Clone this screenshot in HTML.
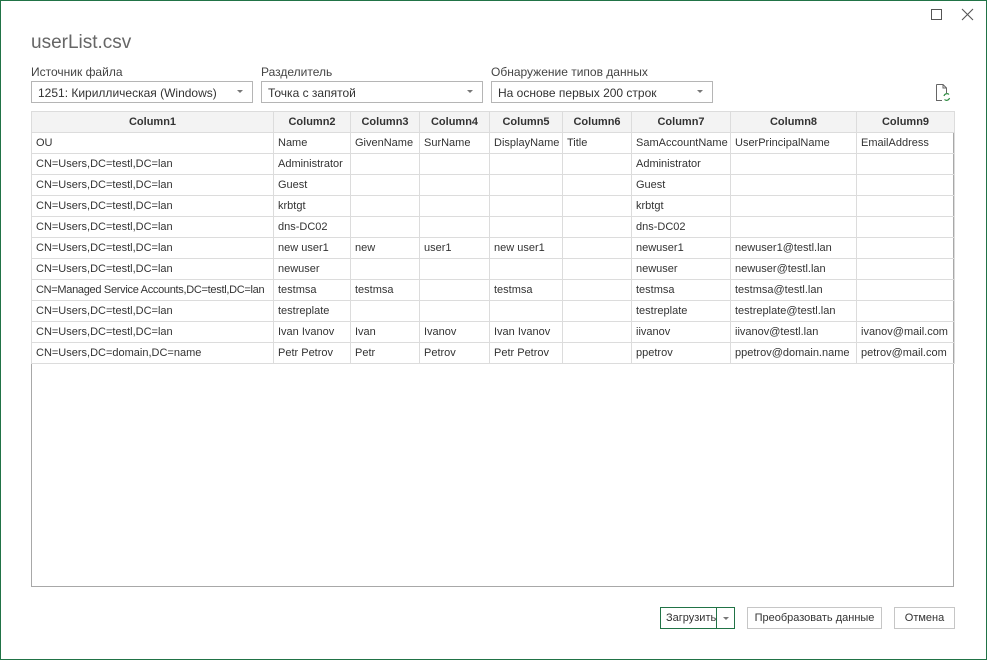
<!DOCTYPE html>
<html><head><meta charset="utf-8"><style>
*{margin:0;padding:0;box-sizing:border-box}
body{width:987px;height:660px;background:#fff;font-family:"Liberation Sans",sans-serif;font-size:11px;color:#333;position:relative;overflow:hidden}
.win{position:absolute;left:0;top:0;width:987px;height:660px;border:1px solid #217346}
.abs{position:absolute}
.title{left:31px;top:32px;font-size:19px;color:#666}
.lbl{top:65px;font-size:12px;color:#444}
.dd{top:81px;height:22px;border:1px solid #b5b5b5;font-size:12px;padding:4px 6px;color:#333}
.dd:after{content:"";position:absolute;right:9px;top:8px;border-left:3px solid transparent;border-right:3px solid transparent;border-top:3px solid #777}
table{position:absolute;left:31px;top:111px;width:923px;border-collapse:collapse;table-layout:fixed}
td,th{height:21px;border:1px solid #dcdcdc;padding:0 4px;white-space:nowrap;overflow:hidden;font-size:11px;text-align:left;color:#333}
th{background:#f3f3f3;text-align:center;font-weight:bold}
.frame{position:absolute;left:31px;top:111px;width:923px;height:476px;border:1px solid #a8a8a8}
.btn{top:607px;height:22px;border:1px solid #c6c6c6;font-size:11px;text-align:center;line-height:20px;color:#333}
</style></head><body>
<div class="win"></div>
<div class="abs" style="left:931px;top:9px;width:11px;height:11px;border:1px solid #555"></div>
<svg class="abs" style="left:961px;top:8px" width="13" height="13"><path d="M1 1L12 12M12 1L1 12" stroke="#555" stroke-width="1.1"/></svg>
<div class="abs title">userList.csv</div>
<div class="abs lbl" style="left:31px">Источник файла</div>
<div class="abs lbl" style="left:261px">Разделитель</div>
<div class="abs lbl" style="left:491px">Обнаружение типов данных</div>
<div class="abs dd" style="left:31px;width:222px">1251: Кириллическая (Windows)</div>
<div class="abs dd" style="left:261px;width:222px">Точка с запятой</div>
<div class="abs dd" style="left:491px;width:222px">На основе первых 200 строк</div>
<svg class="abs" style="left:935px;top:84px" width="16" height="18"><path d="M1.5 0.5H8L11.5 4V9M1.5 0.5V16.5H7" fill="none" stroke="#666"/><path d="M8 0.5V4H11.5" fill="none" stroke="#666"/><path d="M9 12a3 3 0 0 1 5-1.5M14.5 14a3 3 0 0 1-5 1.5" fill="none" stroke="#2b8a3e" stroke-width="1.2"/></svg>
<div class="frame"></div>
<table>
<colgroup><col style="width:242px"><col style="width:77px"><col style="width:69px"><col style="width:70px"><col style="width:73px"><col style="width:69px"><col style="width:99px"><col style="width:126px"><col style="width:98px"></colgroup>
<tr><th>Column1</th><th>Column2</th><th>Column3</th><th>Column4</th><th>Column5</th><th>Column6</th><th>Column7</th><th>Column8</th><th>Column9</th></tr>
<tr><td>OU</td><td>Name</td><td>GivenName</td><td>SurName</td><td>DisplayName</td><td>Title</td><td>SamAccountName</td><td>UserPrincipalName</td><td>EmailAddress</td></tr>
<tr><td>CN=Users,DC=testl,DC=lan</td><td>Administrator</td><td></td><td></td><td></td><td></td><td>Administrator</td><td></td><td></td></tr>
<tr><td>CN=Users,DC=testl,DC=lan</td><td>Guest</td><td></td><td></td><td></td><td></td><td>Guest</td><td></td><td></td></tr>
<tr><td>CN=Users,DC=testl,DC=lan</td><td>krbtgt</td><td></td><td></td><td></td><td></td><td>krbtgt</td><td></td><td></td></tr>
<tr><td>CN=Users,DC=testl,DC=lan</td><td>dns-DC02</td><td></td><td></td><td></td><td></td><td>dns-DC02</td><td></td><td></td></tr>
<tr><td>CN=Users,DC=testl,DC=lan</td><td>new user1</td><td>new</td><td>user1</td><td>new user1</td><td></td><td>newuser1</td><td>newuser1@testl.lan</td><td></td></tr>
<tr><td>CN=Users,DC=testl,DC=lan</td><td>newuser</td><td></td><td></td><td></td><td></td><td>newuser</td><td>newuser@testl.lan</td><td></td></tr>
<tr><td style="letter-spacing:-0.3px">CN=Managed Service Accounts,DC=testl,DC=lan</td><td>testmsa</td><td>testmsa</td><td></td><td>testmsa</td><td></td><td>testmsa</td><td>testmsa@testl.lan</td><td></td></tr>
<tr><td>CN=Users,DC=testl,DC=lan</td><td>testreplate</td><td></td><td></td><td></td><td></td><td>testreplate</td><td>testreplate@testl.lan</td><td></td></tr>
<tr><td>CN=Users,DC=testl,DC=lan</td><td>Ivan Ivanov</td><td>Ivan</td><td>Ivanov</td><td>Ivan Ivanov</td><td></td><td>iivanov</td><td>iivanov@testl.lan</td><td>ivanov@mail.com</td></tr>
<tr><td>CN=Users,DC=domain,DC=name</td><td>Petr Petrov</td><td>Petr</td><td>Petrov</td><td>Petr Petrov</td><td></td><td>ppetrov</td><td>ppetrov@domain.name</td><td>petrov@mail.com</td></tr>
</table>
<div class="abs btn" style="left:660px;width:75px;border-color:#217346;text-align:left;padding-left:5px">Загрузить</div>
<div class="abs" style="left:716px;top:607px;width:1px;height:22px;background:#217346"></div>
<div class="abs" style="left:723px;top:617px;border-left:3px solid transparent;border-right:3px solid transparent;border-top:3px solid #777"></div>
<div class="abs btn" style="left:747px;width:135px">Преобразовать данные</div>
<div class="abs btn" style="left:894px;width:61px">Отмена</div>
</body></html>
